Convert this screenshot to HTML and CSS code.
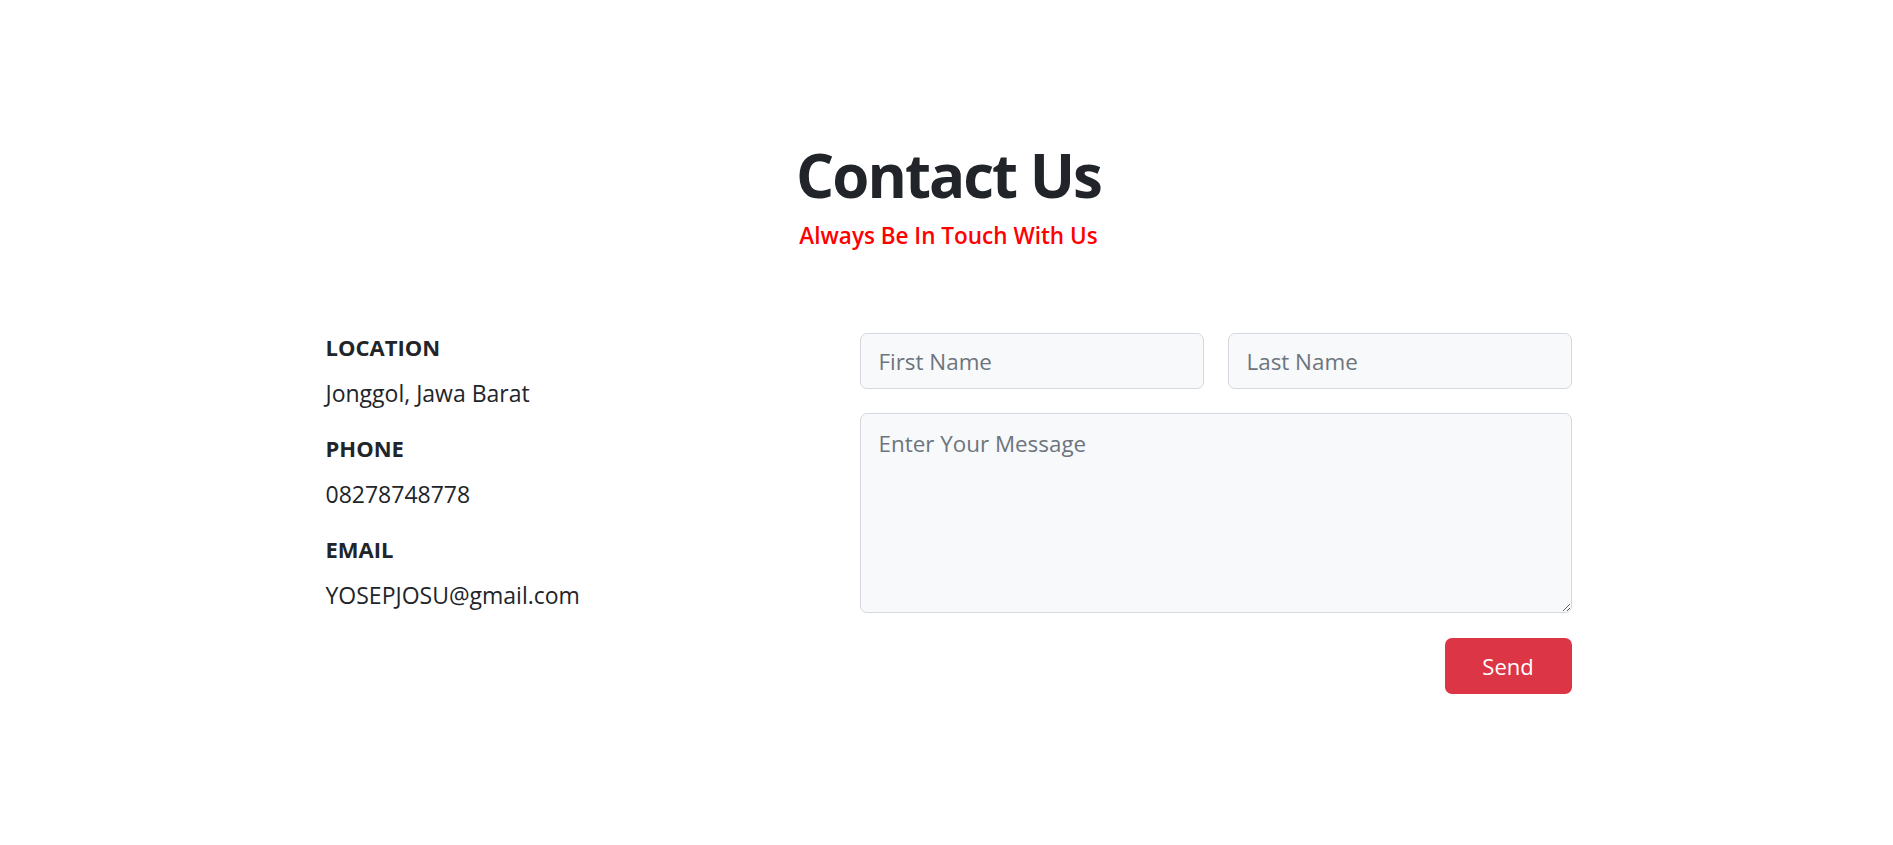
FILE: index.html
```html
<!DOCTYPE html>
<html lang="en">
<head>
<meta charset="utf-8">
<title>Contact Us</title>
<link rel="stylesheet" href="styles.css">
</head>
<body>
<section class="contact">
  <header class="contact-head">
    <h1 class="contact-title">Contact Us</h1>
    <p class="contact-sub">Always Be In Touch With Us</p>
  </header>
  <div class="contact-grid">
    <div class="info">
      <div class="info-item">
        <h3 class="info-label">LOCATION</h3>
        <p class="info-value">Jonggol, Jawa Barat</p>
      </div>
      <div class="info-item">
        <h3 class="info-label">PHONE</h3>
        <p class="info-value">08278748778</p>
      </div>
      <div class="info-item">
        <h3 class="info-label">EMAIL</h3>
        <p class="info-value">YOSEPJOSU@gmail.com</p>
      </div>
    </div>
    <form class="form">
      <div class="form-names">
        <input class="field" type="text" placeholder="First Name">
        <input class="field" type="text" placeholder="Last Name">
      </div>
      <textarea class="field field-area" placeholder="Enter Your Message"></textarea>
      <div class="form-actions">
        <button class="btn-send" type="button">Send</button>
      </div>
    </form>
  </div>
</section>
</body>
</html>
```

FILE: styles.css
```css
* { box-sizing: border-box; }
html, body { margin: 0; padding: 0; background: #fff; }
body {
  font-family: "Open Sans", "Noto Sans", sans-serif;
  color: #212529;
}
.contact {
  width: 1246px;
  margin: 0 auto;
  padding-top: 135px;
  position: relative;
  left: 2px;
}
.contact-head { text-align: center; }
.contact-title {
  margin: 0;
  font-size: 60px;
  line-height: 80px;
  font-weight: 700;
  letter-spacing: -2px;
  color: #212529;
}
.contact-sub {
  margin: 4px 0 0;
  font-size: 22.5px;
  line-height: 33px;
  font-weight: 600;
  color: #ff0000;
}
.contact-grid {
  display: grid;
  grid-template-columns: 534px 712px;
  margin-top: 81px;
}
.info { padding-top: 2px; }
.info-item { margin-bottom: 28px; }
.info-label {
  margin: 0 0 19px;
  font-size: 22px;
  line-height: 25px;
  font-weight: 700;
}
.info-value {
  margin: 0;
  font-size: 23px;
  line-height: 29px;
  font-weight: 400;
}
.form { display: flex; flex-direction: column; }
.form-names {
  display: grid;
  grid-template-columns: 1fr 1fr;
  gap: 24px;
  margin-bottom: 24px;
}
.field {
  display: block;
  width: 100%;
  height: 56px;
  padding: 10px 18px;
  font-family: inherit;
  font-size: 22.4px;
  line-height: 33px;
  color: #212529;
  background: #f8f9fa;
  border: 1px solid #d4d8dd;
  border-radius: 7px;
  outline: none;
}
.field::placeholder { color: #6c757d; }
.field-area {
  height: 200px;
  padding-top: 13px;
  resize: vertical;
}
.form-actions {
  display: flex;
  justify-content: flex-end;
  margin-top: 25px;
}
.btn-send {
  width: 127px;
  height: 56px;
  border: none;
  border-radius: 7px;
  background: #dc3545;
  color: #fff;
  font-family: inherit;
  font-size: 22px;
  font-weight: 400;
  cursor: pointer;
}
```
